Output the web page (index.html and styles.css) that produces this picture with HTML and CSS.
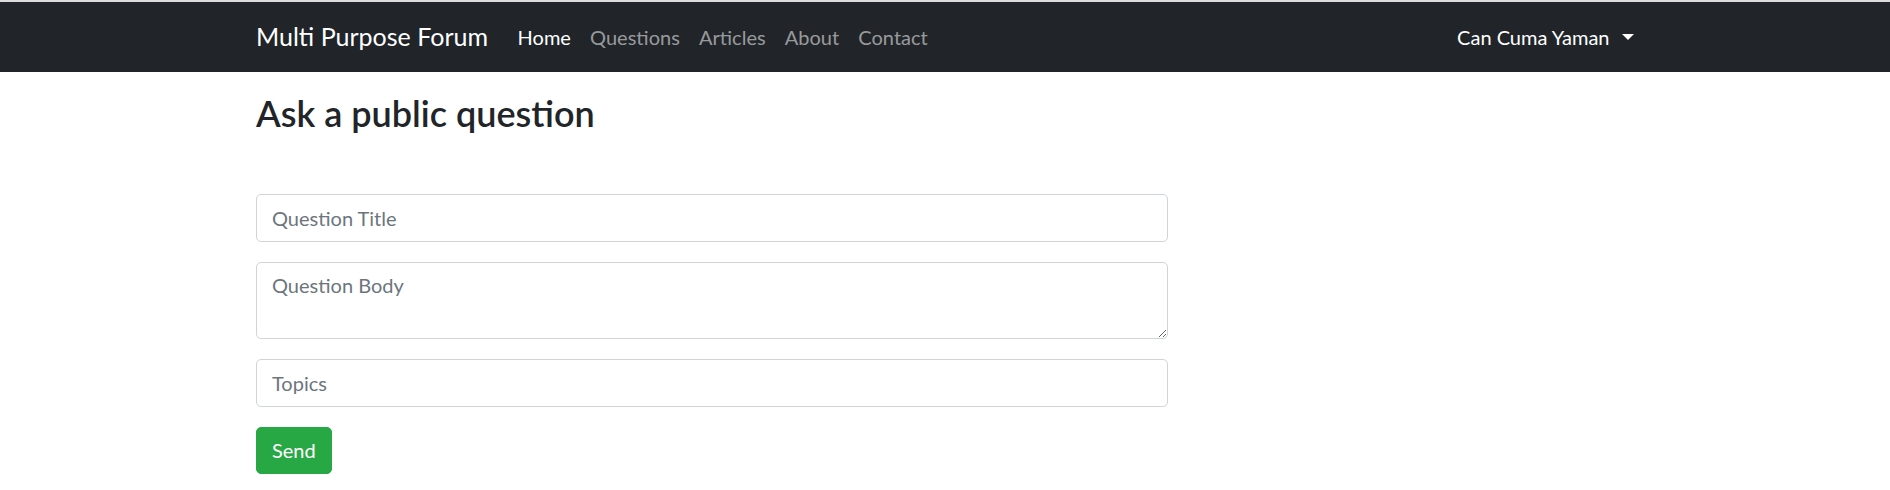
FILE: index.html
```html
<!DOCTYPE html>
<html lang="en">
<head>
<meta charset="utf-8">
<title>Ask a public question - Multi Purpose Forum</title>
<link rel="stylesheet" href="styles.css">
</head>
<body>
<div class="topstrip"></div>
<nav class="navbar">
  <div class="container nav-inner">
    <a class="brand" href="#">Multi Purpose Forum</a>
    <ul class="nav-links">
      <li><a class="nav-link active" href="#">Home</a></li>
      <li><a class="nav-link" href="#">Questions</a></li>
      <li><a class="nav-link" href="#">Articles</a></li>
      <li><a class="nav-link" href="#">About</a></li>
      <li><a class="nav-link" href="#">Contact</a></li>
    </ul>
    <a class="nav-link user-toggle" href="#">Can Cuma Yaman<span class="caret"></span></a>
  </div>
</nav>
<main class="container">
  <div class="col-8">
    <h3 class="page-title">Ask a public question</h3>
    <form class="ask-form">
      <div class="form-group"><input class="form-control" type="text" placeholder="Question Title"></div>
      <div class="form-group"><textarea class="form-control textarea" rows="2" placeholder="Question Body"></textarea></div>
      <div class="form-group"><input class="form-control" type="text" placeholder="Topics"></div>
      <button class="btn-success" type="button">Send</button>
    </form>
  </div>
</main>
</body>
</html>
```

FILE: styles.css
```css
* { box-sizing: border-box; }

html, body {
  margin: 0;
  padding: 0;
  background: #ffffff;
  font-family: Lato, "Open Sans", "Liberation Sans", sans-serif;
  font-size: 20px;
  line-height: 1.5;
  color: #212529;
}

.topstrip {
  height: 2px;
  background: #dcdcdc;
}

.container {
  width: 1387.5px;
  margin-left: 256px;
}

.navbar {
  background: #212529;
  height: 70px;
  padding: 10px 0;
}

.nav-inner {
  display: flex;
  align-items: center;
  height: 50px;
}

.brand {
  font-size: 25px;
  line-height: 37.5px;
  padding: 6.25px 0;
  margin-right: 20px;
  color: #ffffff;
  text-decoration: none;
  white-space: nowrap;
}

.nav-links {
  display: flex;
  list-style: none;
  margin: 0;
  padding: 0;
  flex: 1;
}

.nav-link {
  display: block;
  padding: 10px 9.6px;
  line-height: 30px;
  color: rgba(255, 255, 255, 0.55);
  text-decoration: none;
  white-space: nowrap;
}

.nav-link.active {
  color: #ffffff;
}

.user-toggle {
  color: #ffffff;
  display: flex;
  align-items: center;
  padding-right: 10px;
}

.caret {
  display: inline-block;
  margin-left: 12px;
  width: 0;
  height: 0;
  border-top: 6px solid #ffffff;
  border-left: 6px solid transparent;
  border-right: 6px solid transparent;
}

.col-8 {
  width: 912px;
}

.page-title {
  font-size: 36px;
  font-weight: 600;
  line-height: 43.2px;
  margin: 19.5px 0 59.3px;
  color: #212529;
}

.form-group {
  margin-bottom: 20px;
}

.form-control {
  display: block;
  width: 100%;
  height: 47.5px;
  padding: 7.5px 15px;
  font-family: inherit;
  font-size: 20px;
  line-height: 30px;
  color: #495057;
  background: #ffffff;
  border: 1.25px solid #ced4da;
  border-radius: 5px;
  outline: none;
}

.form-control::placeholder {
  color: #6c757d;
  opacity: 1;
}

.textarea {
  height: 77.5px;
  resize: vertical;
}

.btn-success {
  display: inline-block;
  height: 47.5px;
  padding: 7.5px 15px;
  font-family: inherit;
  font-size: 20px;
  line-height: 30px;
  color: #ffffff;
  background: #28a745;
  border: 1.25px solid #28a745;
  border-radius: 5px;
  cursor: pointer;
}
```
